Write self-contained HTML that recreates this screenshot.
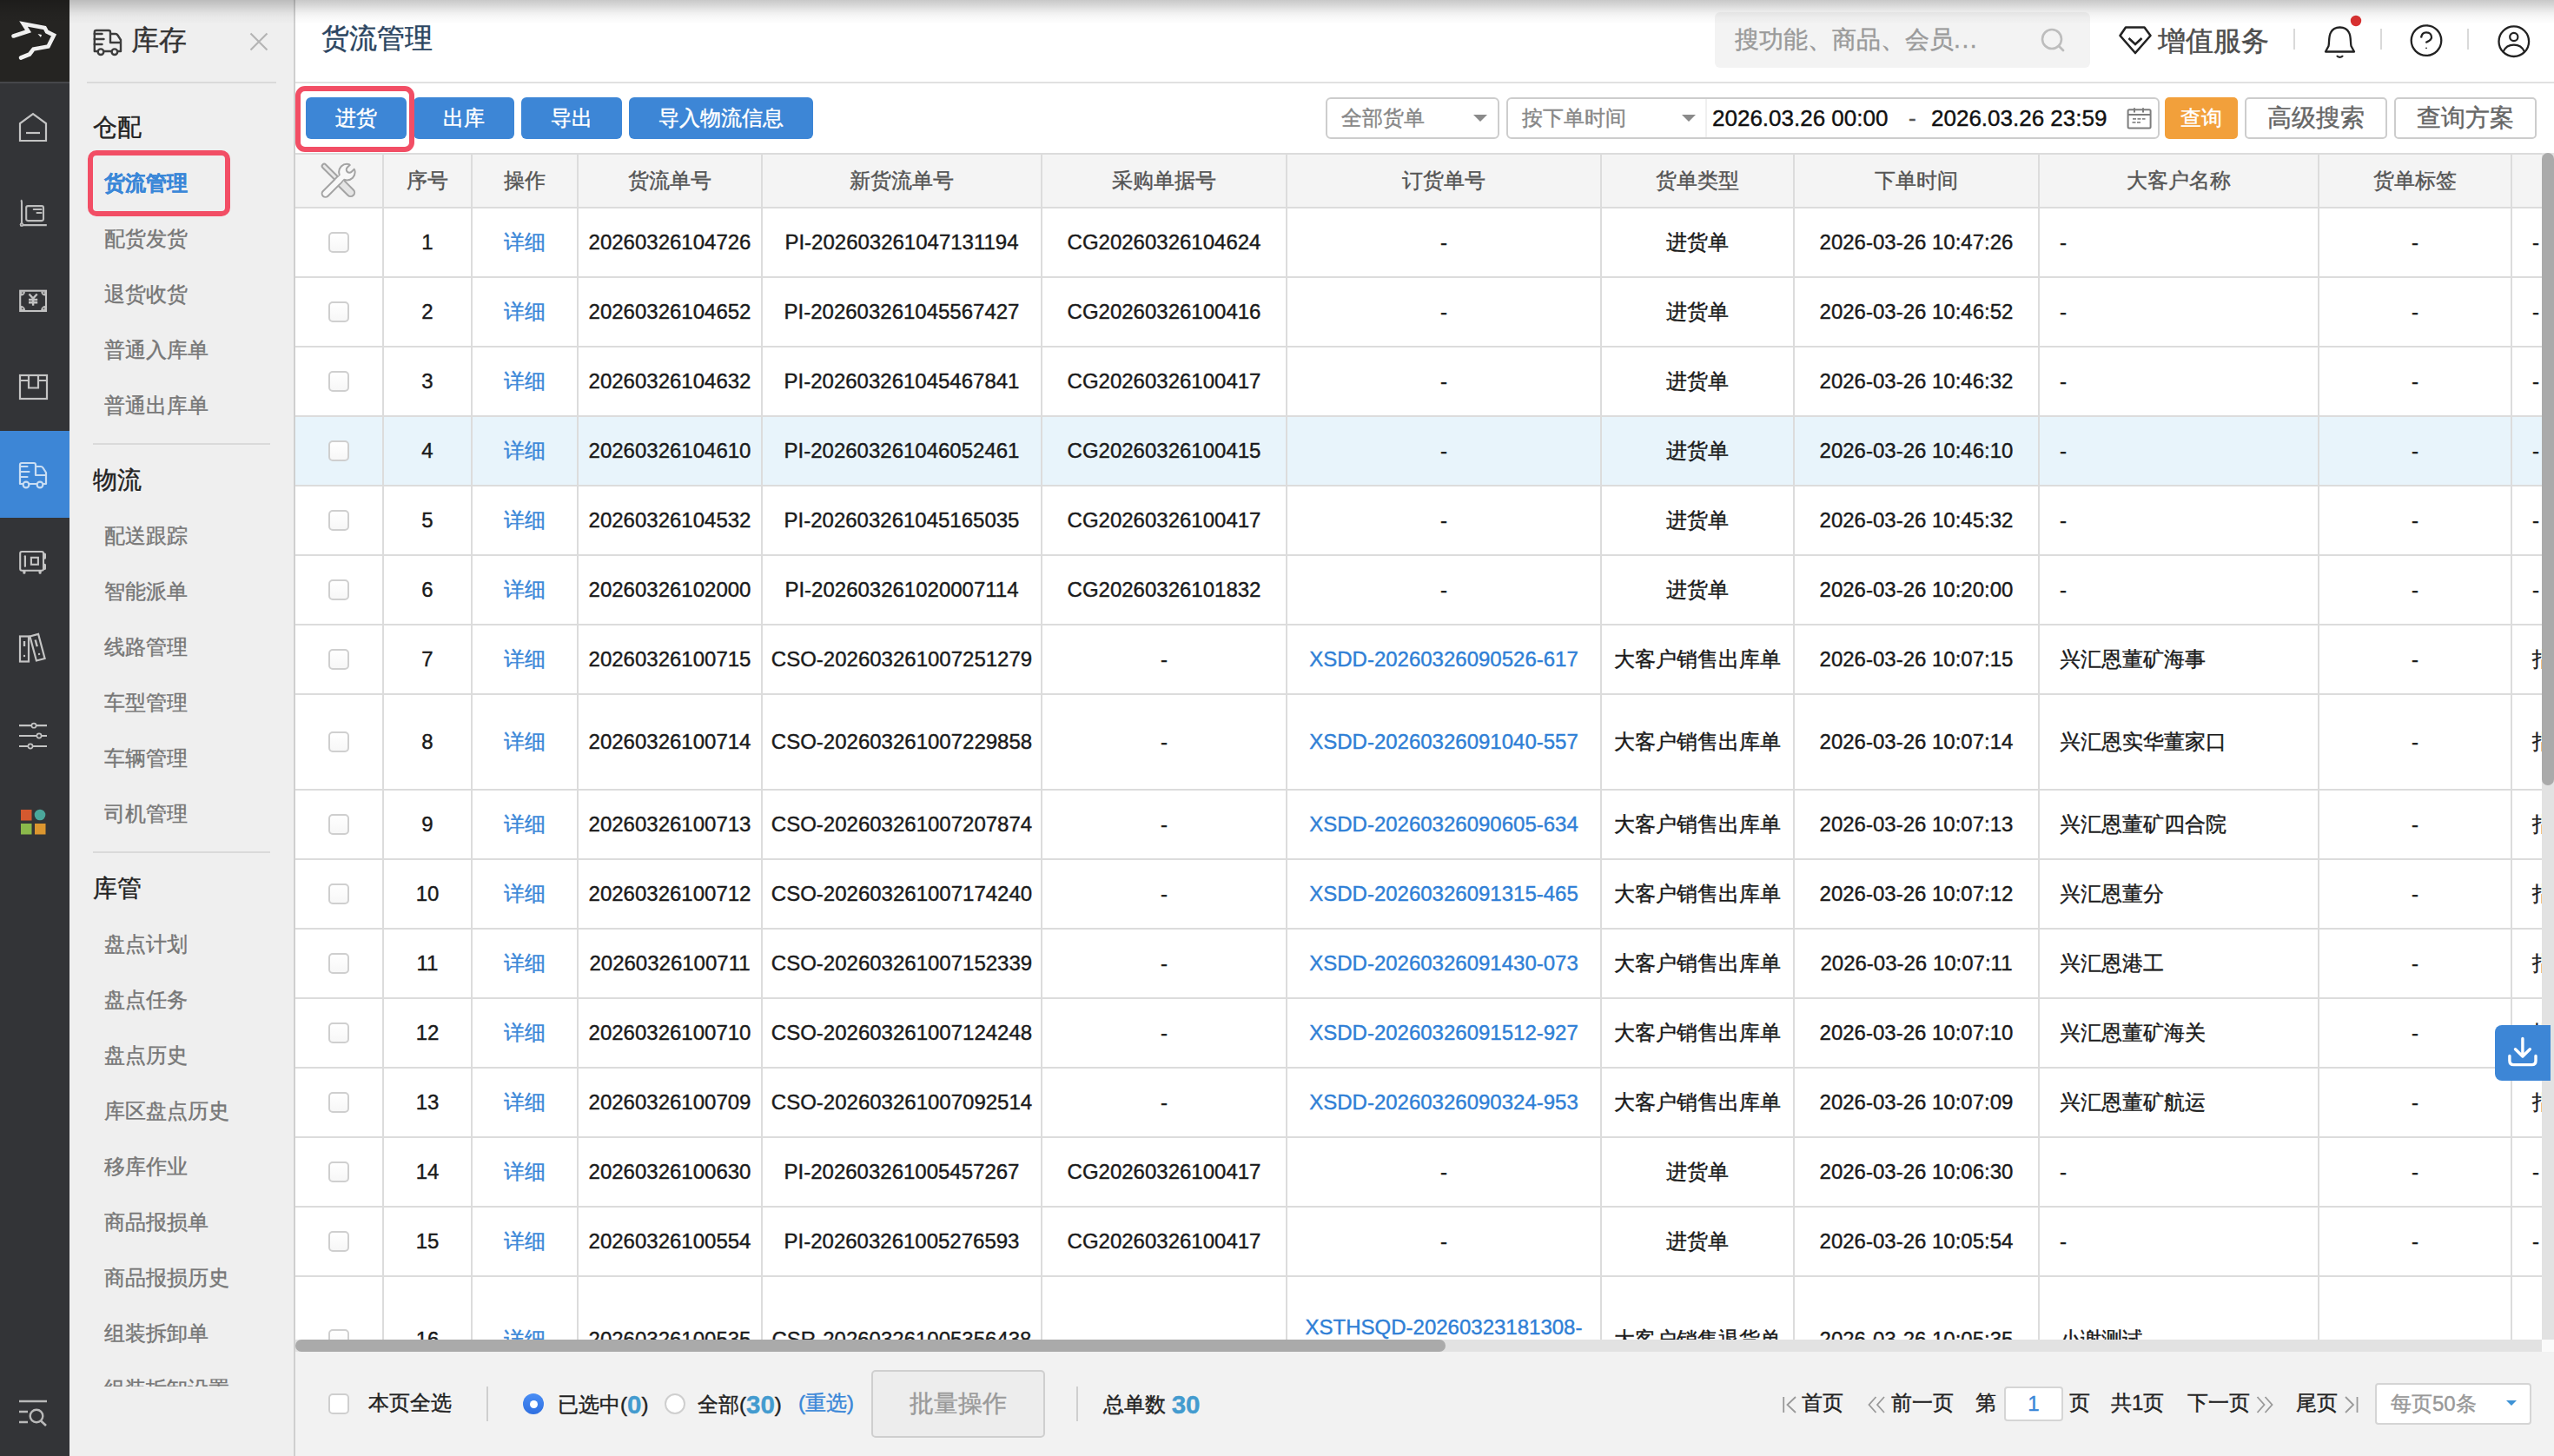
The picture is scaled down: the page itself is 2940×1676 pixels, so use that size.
<!DOCTYPE html><html><head><meta charset="utf-8"><title>货流管理</title><style>
*{box-sizing:border-box;margin:0;padding:0}
html,body{width:2940px;height:1676px;overflow:hidden;background:#fff;font-family:"Liberation Sans", sans-serif;-webkit-text-stroke-width:0.4px}
.a{position:absolute;white-space:nowrap}
.c{text-align:center}
svg{position:absolute;overflow:visible}
</style></head><body>
<div class="a" style="left:0;top:0;width:80px;height:1676px;background:#333437"></div>
<div class="a" style="left:0;top:0;width:80px;height:94px;background:#252422"></div>
<div class="a" style="left:0;top:94px;width:80px;height:2px;background:#46474a"></div>
<div class="a" style="left:0;top:496px;width:80px;height:100px;background:#3d86d6"></div>
<svg style="left:0;top:0" width="80" height="94"><path d="M15.5,41.5 L32.5,36 L27,27.5 L51.5,32 L54,36.5 L62,40.5 L55.5,53.5 L38.5,56.5 L34,62.5 L24,66.5" fill="none" stroke="#f0f0f0" stroke-width="4.6" stroke-linejoin="miter" stroke-linecap="round"/><path d="M43.5,39 L48,40 L47,43 Z" fill="#f2f2f2"/></svg>
<svg style="left:0;top:96px" width="80" height="100"><path d="M23,66 L23,46 L38,35 L53,46 L53,66 Z" fill="none" stroke="#c4c4c4" stroke-width="2.2"/><path d="M30,57 L46,57" stroke="#c4c4c4" stroke-width="2.2"/></svg>
<svg style="left:0;top:196px" width="80" height="100"><path d="M24.2,34.2 Q25,35 25,37 L25,62 M23,63.1 L53.8,63.1" fill="none" stroke="#bdbdbd" stroke-width="2.1"/><circle cx="25" cy="62.6" r="2.3" fill="#bdbdbd"/><circle cx="25" cy="62.6" r="0.8" fill="#777"/><rect x="30.2" y="41.1" width="19.8" height="17" rx="2" fill="none" stroke="#bdbdbd" stroke-width="2.1"/><path d="M38.7,44.9 L47.6,44.9 M42.5,49 L47.6,49" stroke="#bdbdbd" stroke-width="2" stroke-linecap="round"/></svg>
<svg style="left:0;top:296px" width="80" height="100"><rect x="23.2" y="38.7" width="29.8" height="23.3" fill="none" stroke="#c2c2c2" stroke-width="2.1"/><path d="M24,39.6 L29,39.6 A5,5 0 0 1 24,44.6 Z M52.2,39.6 L47.2,39.6 A5,5 0 0 0 52.2,44.6 Z M24,61.1 L29,61.1 A5,5 0 0 0 24,56.1 Z M52.2,61.1 L47.2,61.1 A5,5 0 0 1 52.2,56.1 Z" fill="#c2c2c2"/><circle cx="25.8" cy="41.3" r="1" fill="#5a5a5a"/><circle cx="50.4" cy="41.3" r="1" fill="#5a5a5a"/><circle cx="25.8" cy="59.3" r="1" fill="#5a5a5a"/><circle cx="50.4" cy="59.3" r="1" fill="#5a5a5a"/><path d="M33.5,42.5 L38.1,47.5 L42.7,42.5 M38.1,47.5 L38.1,55.8 M33,49 L43.2,49 M33,52.2 L43.2,52.2" fill="none" stroke="#c2c2c2" stroke-width="2.4"/></svg>
<svg style="left:0;top:396px" width="80" height="100"><rect x="23" y="36" width="31" height="27" fill="none" stroke="#c4c4c4" stroke-width="2.2"/><path d="M23,42 L33,42 M44,42 L54,42 M33,36 L33,50.5 L44,50.5 L44,36" fill="none" stroke="#c4c4c4" stroke-width="2.2"/></svg>
<svg style="left:0;top:496px" width="80" height="100"><path d="M53,51 L41,51 L41,39 Q41,37 39,37 L25,37 Q23,37 23,39 L23,61 L53,61 L53,48 L49.5,42.5 Q48.5,41 47,41 L41,41" fill="none" stroke="#c9ddf3" stroke-width="2.2" stroke-linejoin="round"/><path d="M23,41 L31.5,41 M23,47 L33.5,47 M23,53 L31.5,53" stroke="#c9ddf3" stroke-width="2.2" stroke-linecap="round"/><circle cx="30" cy="62" r="3.4" fill="#3d86d6" stroke="#c9ddf3" stroke-width="2.2"/><circle cx="46" cy="62" r="3.4" fill="#3d86d6" stroke="#c9ddf3" stroke-width="2.2"/></svg>
<svg style="left:0;top:596px" width="80" height="100"><rect x="23.2" y="39" width="26.8" height="21.8" rx="2" fill="none" stroke="#c4c4c4" stroke-width="2.1"/><path d="M51.5,42 L51.5,46.2 M51.5,54.2 L51.5,58.4" stroke="#c4c4c4" stroke-width="3" stroke-linecap="round"/><path d="M28.9,44.3 L28.9,55.8" stroke="#c4c4c4" stroke-width="2.2" stroke-linecap="round"/><rect x="35.9" y="45.8" width="8" height="8" fill="none" stroke="#c4c4c4" stroke-width="2.1"/><path d="M27.9,61.5 L27.9,63.2 M46.1,61.5 L46.1,63.2" stroke="#c4c4c4" stroke-width="3.2" stroke-linecap="round"/></svg>
<svg style="left:0;top:696px" width="80" height="100"><rect x="23" y="36.5" width="10" height="29" fill="none" stroke="#c4c4c4" stroke-width="2.2"/><path d="M28,42 L28,48" stroke="#c4c4c4" stroke-width="2.4"/><circle cx="28" cy="59" r="1.2" fill="#c4c4c4"/><g transform="translate(0,-1.8) rotate(-15 43 51)"><rect x="38" y="36.5" width="10" height="29" fill="none" stroke="#c4c4c4" stroke-width="2.2"/><path d="M43,42 L43,50" stroke="#c4c4c4" stroke-width="2.4"/><circle cx="43" cy="59" r="1.2" fill="#c4c4c4"/></g></svg>
<svg style="left:0;top:796px" width="80" height="100"><path d="M22,39.2 L54,39.2 M22,51 L54,51 M22,63 L54,63" stroke="#c4c4c4" stroke-width="2.2"/><circle cx="39" cy="39.2" r="2.6" fill="#333437" stroke="#c4c4c4" stroke-width="1.6"/><circle cx="45" cy="51" r="2.6" fill="#333437" stroke="#c4c4c4" stroke-width="1.6"/><circle cx="35" cy="63" r="2.6" fill="#333437" stroke="#c4c4c4" stroke-width="1.6"/></svg>
<svg style="left:0;top:896px" width="80" height="100"><rect x="24" y="36" width="12.5" height="12.5" fill="#d5592f"/><circle cx="46" cy="42" r="6.3" fill="#4ba79b"/><rect x="24" y="52" width="12.5" height="12.5" fill="#8bb84b"/><rect x="40" y="52" width="12.5" height="12.5" fill="#dc962f"/></svg>
<svg style="left:0;top:1576px" width="80" height="100"><path d="M22,37 L54,37 M22,49 L32,49 M22,61 L32,61" stroke="#b9b9b9" stroke-width="2.6"/><circle cx="42" cy="54" r="7.3" fill="none" stroke="#b9b9b9" stroke-width="2.4"/><path d="M47,59.5 L53,65" stroke="#b9b9b9" stroke-width="2.6"/></svg>
<div class="a" style="left:80px;top:0;width:258px;height:1676px;background:#efefef"></div>
<div class="a" style="left:338px;top:0;width:2px;height:1676px;background:#cfcfcf"></div>
<svg style="left:80px;top:0" width="80" height="94"><path d="M59,49 L47,49 L47,37 Q47,35 45,35 L30.8,35 Q28.8,35 28.8,37 L28.8,59 L59,59 L59,46 L55.5,40.5 Q54.5,39 53,39 L47,39" fill="none" stroke="#3c3c3c" stroke-width="2.4" stroke-linejoin="round"/><path d="M28.8,39 L37.5,39 M28.8,45 L39.5,45 M28.8,51 L37.5,51" stroke="#3c3c3c" stroke-width="2.4" stroke-linecap="round"/><circle cx="36" cy="59.7" r="3.3" fill="#efefef" stroke="#3c3c3c" stroke-width="2.4"/><circle cx="51.9" cy="59.7" r="3.3" fill="#efefef" stroke="#3c3c3c" stroke-width="2.4"/></svg>
<div class="a" style="left:151px;top:26px;height:40px;line-height:40px;font-size:32px;color:#333">库存</div>
<svg style="left:280px;top:30px" width="36" height="36"><path d="M8.5,8.5 L27.5,27.5 M27.5,8.5 L8.5,27.5" stroke="#b4b4b4" stroke-width="2.2"/></svg>
<div class="a" style="left:100px;top:94px;width:218px;height:2px;background:#dadada"></div>
<div class="a" style="left:107px;top:127px;height:40px;line-height:40px;font-size:28px;color:#222">仓配</div>
<div class="a" style="left:120px;top:191px;height:40px;line-height:40px;font-size:24px;color:#3a87d8;font-weight:bold;-webkit-text-stroke:0.3px #3a87d8">货流管理</div>
<div class="a" style="left:120px;top:255px;height:40px;line-height:40px;font-size:24px;color:#777">配货发货</div>
<div class="a" style="left:120px;top:319px;height:40px;line-height:40px;font-size:24px;color:#777">退货收货</div>
<div class="a" style="left:120px;top:383px;height:40px;line-height:40px;font-size:24px;color:#777">普通入库单</div>
<div class="a" style="left:120px;top:447px;height:40px;line-height:40px;font-size:24px;color:#777">普通出库单</div>
<div class="a" style="left:107px;top:510px;width:204px;height:2px;background:#dadada"></div>
<div class="a" style="left:107px;top:533px;height:40px;line-height:40px;font-size:28px;color:#222">物流</div>
<div class="a" style="left:120px;top:597px;height:40px;line-height:40px;font-size:24px;color:#777">配送跟踪</div>
<div class="a" style="left:120px;top:661px;height:40px;line-height:40px;font-size:24px;color:#777">智能派单</div>
<div class="a" style="left:120px;top:725px;height:40px;line-height:40px;font-size:24px;color:#777">线路管理</div>
<div class="a" style="left:120px;top:789px;height:40px;line-height:40px;font-size:24px;color:#777">车型管理</div>
<div class="a" style="left:120px;top:853px;height:40px;line-height:40px;font-size:24px;color:#777">车辆管理</div>
<div class="a" style="left:120px;top:917px;height:40px;line-height:40px;font-size:24px;color:#777">司机管理</div>
<div class="a" style="left:107px;top:980px;width:204px;height:2px;background:#dadada"></div>
<div class="a" style="left:107px;top:1003px;height:40px;line-height:40px;font-size:28px;color:#222">库管</div>
<div class="a" style="left:80px;top:0;width:258px;height:1596px;overflow:hidden">
<div class="a" style="left:40px;top:1067px;height:40px;line-height:40px;font-size:24px;color:#777">盘点计划</div>
<div class="a" style="left:40px;top:1131px;height:40px;line-height:40px;font-size:24px;color:#777">盘点任务</div>
<div class="a" style="left:40px;top:1195px;height:40px;line-height:40px;font-size:24px;color:#777">盘点历史</div>
<div class="a" style="left:40px;top:1259px;height:40px;line-height:40px;font-size:24px;color:#777">库区盘点历史</div>
<div class="a" style="left:40px;top:1323px;height:40px;line-height:40px;font-size:24px;color:#777">移库作业</div>
<div class="a" style="left:40px;top:1387px;height:40px;line-height:40px;font-size:24px;color:#777">商品报损单</div>
<div class="a" style="left:40px;top:1451px;height:40px;line-height:40px;font-size:24px;color:#777">商品报损历史</div>
<div class="a" style="left:40px;top:1515px;height:40px;line-height:40px;font-size:24px;color:#777">组装拆卸单</div>
<div class="a" style="left:40px;top:1579px;height:40px;line-height:40px;font-size:24px;color:#777">组装拆卸设置</div>
</div>
<div class="a" style="left:101px;top:173px;width:164px;height:76px;border:6px solid #f24e65;border-radius:10px"></div>
<div class="a" style="left:370px;top:22px;height:44px;line-height:44px;font-size:32px;color:#2b4561">货流管理</div>
<div class="a" style="left:340px;top:94px;width:2600px;height:2px;background:#e1e1e1"></div>
<div class="a" style="left:1974px;top:14px;width:432px;height:64px;background:#f3f3f3;border-radius:6px"></div>
<div class="a" style="left:1997px;top:26px;height:40px;line-height:40px;font-size:28px;color:#9a9a9a">搜功能、商品、会员<span style="letter-spacing:1.6px">...</span></div>
<svg style="left:2340px;top:23.5px" width="44" height="44"><circle cx="22" cy="21" r="11" fill="none" stroke="#bdbdbd" stroke-width="2.6"/><path d="M30,29 L35,34" stroke="#bdbdbd" stroke-width="2.8" stroke-linecap="round"/></svg>
<svg style="left:2430px;top:20px" width="56" height="50"><path d="M17,11.5 L38.5,11.5 L45.5,21 L28,41 L10.5,21 Z" fill="none" stroke="#222" stroke-width="2.6" stroke-linejoin="round"/><path d="M20.5,24 L28,31 L35.5,24" fill="none" stroke="#222" stroke-width="2.6"/></svg>
<div class="a" style="left:2484px;top:25px;height:44px;line-height:44px;font-size:32px;color:#4d4d4d">增值服务</div>
<div class="a" style="left:2640px;top:33px;width:2px;height:24px;background:#d9d9d9"></div>
<div class="a" style="left:2740px;top:33px;width:2px;height:24px;background:#d9d9d9"></div>
<div class="a" style="left:2840px;top:33px;width:2px;height:24px;background:#d9d9d9"></div>
<svg style="left:2660px;top:20px" width="70" height="56"><path d="M17,39.5 L20.5,33 C21.5,28 20.5,22 23,17.5 C25,13.5 28,11.5 33.5,11.5 C39,11.5 42,13.5 44,17.5 C46.5,22 45.5,28 46.5,33 L50,39.5 Z" fill="none" stroke="#222" stroke-width="2.3" stroke-linejoin="round"/><path d="M30,44 C31.5,46.5 35.5,46.5 37,44" fill="none" stroke="#222" stroke-width="2.2"/><circle cx="52" cy="4" r="6.2" fill="#d93131"/></svg>
<svg style="left:2760px;top:14px" width="66" height="66"><circle cx="33" cy="32.6" r="17.3" fill="none" stroke="#222" stroke-width="2.3"/><path d="M27,29.5 C27.5,25.5 30,23.3 33,23.3 C36.5,23.3 39,25.8 39,29 C39,32 36,33.5 32.3,35" fill="none" stroke="#222" stroke-width="2.3"/><circle cx="33" cy="41.3" r="0.9" fill="#222"/></svg>
<svg style="left:2860px;top:14px" width="66" height="66"><circle cx="33.8" cy="33.7" r="17.3" fill="none" stroke="#222" stroke-width="2.3"/><circle cx="33.8" cy="28.5" r="4.6" fill="none" stroke="#222" stroke-width="2.2"/><path d="M21.5,45.5 C24,40 28.5,37.7 33.8,37.7 C39,37.7 43.5,40 46,45.5" fill="none" stroke="#222" stroke-width="2.2"/></svg>
<div class="a c" style="left:352px;top:112px;width:116px;height:48px;line-height:48px;background:#3d86d6;border-radius:6px;font-size:24px;color:#fff">进货</div>
<div class="a c" style="left:476px;top:112px;width:116px;height:48px;line-height:48px;background:#3d86d6;border-radius:6px;font-size:24px;color:#fff">出库</div>
<div class="a c" style="left:600px;top:112px;width:116px;height:48px;line-height:48px;background:#3d86d6;border-radius:6px;font-size:24px;color:#fff">导出</div>
<div class="a c" style="left:724px;top:112px;width:212px;height:48px;line-height:48px;background:#3d86d6;border-radius:6px;font-size:24px;color:#fff">导入物流信息</div>
<div class="a" style="left:340px;top:99px;width:137px;height:76px;border:6px solid #f24e65;border-radius:11px"></div>
<div class="a" style="left:1526px;top:112px;width:200px;height:48px;border:2px solid #cdcdcd;border-radius:6px;background:#fff"></div>
<div class="a" style="left:1544px;top:116px;height:40px;line-height:40px;font-size:24px;color:#888">全部货单</div>
<svg style="left:1690px;top:126px" width="28" height="20"><path d="M6,6 L22,6 L14,14 Z" fill="#8a8a8a"/></svg>
<div class="a" style="left:1734px;top:112px;width:752px;height:48px;border:2px solid #cdcdcd;border-radius:6px;background:#fff"></div>
<div class="a" style="left:1963px;top:114px;width:2px;height:44px;background:#f0f0f0"></div>
<div class="a" style="left:1752px;top:116px;height:40px;line-height:40px;font-size:24px;color:#888">按下单时间</div>
<svg style="left:1930px;top:126px" width="28" height="20"><path d="M6,6 L22,6 L14,14 Z" fill="#8a8a8a"/></svg>
<div class="a" style="left:1971px;top:116px;height:40px;line-height:40px;font-size:26px;color:#111">2026.03.26 00:00</div>
<div class="a" style="left:2197px;top:116px;height:40px;line-height:40px;font-size:26px;color:#555">-</div>
<div class="a" style="left:2223px;top:116px;height:40px;line-height:40px;font-size:26px;color:#111">2026.03.26 23:59</div>
<svg style="left:2440px;top:116px" width="44" height="40"><rect x="9.6" y="10.2" width="26" height="21.2" rx="1.5" fill="none" stroke="#7d7d7d" stroke-width="2"/><path d="M9.6,16.1 L35.6,16.1 M17,8.3 L17,13.4 M27,8.3 L27,13.4" stroke="#7d7d7d" stroke-width="2"/><path d="M15,20.8h4M20.5,20.8h4M26,20.8h3.5M14.5,24.9h4M20,24.9h4" stroke="#888" stroke-width="1.7"/></svg>
<div class="a c" style="left:2492px;top:112px;width:84px;height:48px;line-height:48px;background:#f2a03b;border-radius:5px;font-size:24px;color:#fff">查询</div>
<div class="a c" style="left:2584px;top:112px;width:164px;height:48px;line-height:44px;border:2px solid #cdcdcd;border-radius:5px;font-size:28px;color:#666">高级搜索</div>
<div class="a c" style="left:2756px;top:112px;width:164px;height:48px;line-height:44px;border:2px solid #cdcdcd;border-radius:5px;font-size:28px;color:#666">查询方案</div>
<div class="a" style="left:340px;top:176px;width:2586px;height:1366px;overflow:hidden">
<div class="a" style="left:0;top:2px;width:2800px;height:62px;background:#f4f4f4"></div>
<div class="a" style="left:0;top:304px;width:2800px;height:78px;background:#e8f4fb"></div>
<div class="a" style="left:0;top:0;width:2800px;height:2px;background:#dcdcdc"></div>
<div class="a" style="left:0;top:62px;width:2800px;height:2px;background:#dcdcdc"></div>
<div class="a" style="left:0;top:142px;width:2800px;height:2px;background:#dcdcdc"></div>
<div class="a" style="left:0;top:222px;width:2800px;height:2px;background:#dcdcdc"></div>
<div class="a" style="left:0;top:302px;width:2800px;height:2px;background:#dcdcdc"></div>
<div class="a" style="left:0;top:382px;width:2800px;height:2px;background:#dcdcdc"></div>
<div class="a" style="left:0;top:462px;width:2800px;height:2px;background:#dcdcdc"></div>
<div class="a" style="left:0;top:542px;width:2800px;height:2px;background:#dcdcdc"></div>
<div class="a" style="left:0;top:622px;width:2800px;height:2px;background:#dcdcdc"></div>
<div class="a" style="left:0;top:732px;width:2800px;height:2px;background:#dcdcdc"></div>
<div class="a" style="left:0;top:812px;width:2800px;height:2px;background:#dcdcdc"></div>
<div class="a" style="left:0;top:892px;width:2800px;height:2px;background:#dcdcdc"></div>
<div class="a" style="left:0;top:972px;width:2800px;height:2px;background:#dcdcdc"></div>
<div class="a" style="left:0;top:1052px;width:2800px;height:2px;background:#dcdcdc"></div>
<div class="a" style="left:0;top:1132px;width:2800px;height:2px;background:#dcdcdc"></div>
<div class="a" style="left:0;top:1212px;width:2800px;height:2px;background:#dcdcdc"></div>
<div class="a" style="left:0;top:1292px;width:2800px;height:2px;background:#dcdcdc"></div>
<div class="a" style="left:0;top:1438px;width:2800px;height:2px;background:#dcdcdc"></div>
<div class="a" style="left:100px;top:0;width:2px;height:1400px;background:#dcdcdc"></div>
<div class="a" style="left:202px;top:0;width:2px;height:1400px;background:#dcdcdc"></div>
<div class="a" style="left:324px;top:0;width:2px;height:1400px;background:#dcdcdc"></div>
<div class="a" style="left:536px;top:0;width:2px;height:1400px;background:#dcdcdc"></div>
<div class="a" style="left:858px;top:0;width:2px;height:1400px;background:#dcdcdc"></div>
<div class="a" style="left:1140px;top:0;width:2px;height:1400px;background:#dcdcdc"></div>
<div class="a" style="left:1502px;top:0;width:2px;height:1400px;background:#dcdcdc"></div>
<div class="a" style="left:1724px;top:0;width:2px;height:1400px;background:#dcdcdc"></div>
<div class="a" style="left:2006px;top:0;width:2px;height:1400px;background:#dcdcdc"></div>
<div class="a" style="left:2328px;top:0;width:2px;height:1400px;background:#dcdcdc"></div>
<div class="a" style="left:2550px;top:0;width:2px;height:1400px;background:#dcdcdc"></div>
<div class="a c" style="left:101px;top:12px;width:102px;height:40px;line-height:40px;font-size:24px;color:#555">序号</div>
<div class="a c" style="left:203px;top:12px;width:122px;height:40px;line-height:40px;font-size:24px;color:#555">操作</div>
<div class="a c" style="left:325px;top:12px;width:212px;height:40px;line-height:40px;font-size:24px;color:#555">货流单号</div>
<div class="a c" style="left:537px;top:12px;width:322px;height:40px;line-height:40px;font-size:24px;color:#555">新货流单号</div>
<div class="a c" style="left:859px;top:12px;width:282px;height:40px;line-height:40px;font-size:24px;color:#555">采购单据号</div>
<div class="a c" style="left:1141px;top:12px;width:362px;height:40px;line-height:40px;font-size:24px;color:#555">订货单号</div>
<div class="a c" style="left:1503px;top:12px;width:222px;height:40px;line-height:40px;font-size:24px;color:#555">货单类型</div>
<div class="a c" style="left:1725px;top:12px;width:282px;height:40px;line-height:40px;font-size:24px;color:#555">下单时间</div>
<div class="a c" style="left:2007px;top:12px;width:322px;height:40px;line-height:40px;font-size:24px;color:#555">大客户名称</div>
<div class="a c" style="left:2329px;top:12px;width:222px;height:40px;line-height:40px;font-size:24px;color:#555">货单标签</div>
<svg style="left:24px;top:6px" width="54" height="52"><g transform="rotate(45 8.5 8.5)"><rect x="7" y="6" width="26" height="5" rx="2.5" fill="#e8e8e8" stroke="#a3a3a3" stroke-width="2"/><rect x="32" y="4" width="25" height="9" rx="4.5" fill="#e4e4e4" stroke="#a3a3a3" stroke-width="2"/></g><g transform="rotate(-45 11 40.5)"><rect x="6.5" y="36.5" width="30" height="8" rx="4" fill="#f8f8f8" stroke="#a3a3a3" stroke-width="2"/><circle cx="45.5" cy="40.5" r="9.3" fill="#f8f8f8" stroke="#a3a3a3" stroke-width="2"/><rect x="30" y="37.5" width="9" height="6" fill="#f8f8f8"/><rect x="52" y="38" width="8" height="5" fill="#f4f4f4"/><path d="M54.6,37 L49.5,37 A3.5,3.5 0 0 0 49.5,44 L54.6,44" fill="#f4f4f4" stroke="#a3a3a3" stroke-width="2"/><rect x="54.6" y="35" width="6" height="11" fill="#f4f4f4"/></g></svg>
<div class="a" style="left:38px;top:91px;width:24px;height:24px;border:2px solid #cfcfcf;border-radius:5px;background:linear-gradient(#fff,#f7f7f7)"></div>
<div class="a c" style="left:101px;top:83px;width:102px;height:40px;line-height:40px;font-size:24px;color:#1a1a1a">1</div>
<div class="a c" style="left:203px;top:83px;width:122px;height:40px;line-height:40px;font-size:24px;color:#3a87d8">详细</div>
<div class="a c" style="left:325px;top:83px;width:212px;height:40px;line-height:40px;font-size:24px;color:#1a1a1a">20260326104726</div>
<div class="a c" style="left:537px;top:83px;width:322px;height:40px;line-height:40px;font-size:24px;color:#1a1a1a">PI-202603261047131194</div>
<div class="a c" style="left:859px;top:83px;width:282px;height:40px;line-height:40px;font-size:24px;color:#1a1a1a">CG20260326104624</div>
<div class="a c" style="left:1141px;top:83px;width:362px;height:40px;line-height:40px;font-size:24px;color:#1a1a1a">-</div>
<div class="a c" style="left:1503px;top:83px;width:222px;height:40px;line-height:40px;font-size:24px;color:#1a1a1a">进货单</div>
<div class="a c" style="left:1725px;top:83px;width:282px;height:40px;line-height:40px;font-size:24px;color:#1a1a1a">2026-03-26 10:47:26</div>
<div class="a" style="left:2031px;top:83px;height:40px;line-height:40px;font-size:24px;color:#1a1a1a">-</div>
<div class="a c" style="left:2329px;top:83px;width:222px;height:40px;line-height:40px;font-size:24px;color:#1a1a1a">-</div>
<div class="a" style="left:2575px;top:83px;height:40px;line-height:40px;font-size:24px;color:#1a1a1a">-</div>
<div class="a" style="left:38px;top:171px;width:24px;height:24px;border:2px solid #cfcfcf;border-radius:5px;background:linear-gradient(#fff,#f7f7f7)"></div>
<div class="a c" style="left:101px;top:163px;width:102px;height:40px;line-height:40px;font-size:24px;color:#1a1a1a">2</div>
<div class="a c" style="left:203px;top:163px;width:122px;height:40px;line-height:40px;font-size:24px;color:#3a87d8">详细</div>
<div class="a c" style="left:325px;top:163px;width:212px;height:40px;line-height:40px;font-size:24px;color:#1a1a1a">20260326104652</div>
<div class="a c" style="left:537px;top:163px;width:322px;height:40px;line-height:40px;font-size:24px;color:#1a1a1a">PI-202603261045567427</div>
<div class="a c" style="left:859px;top:163px;width:282px;height:40px;line-height:40px;font-size:24px;color:#1a1a1a">CG20260326100416</div>
<div class="a c" style="left:1141px;top:163px;width:362px;height:40px;line-height:40px;font-size:24px;color:#1a1a1a">-</div>
<div class="a c" style="left:1503px;top:163px;width:222px;height:40px;line-height:40px;font-size:24px;color:#1a1a1a">进货单</div>
<div class="a c" style="left:1725px;top:163px;width:282px;height:40px;line-height:40px;font-size:24px;color:#1a1a1a">2026-03-26 10:46:52</div>
<div class="a" style="left:2031px;top:163px;height:40px;line-height:40px;font-size:24px;color:#1a1a1a">-</div>
<div class="a c" style="left:2329px;top:163px;width:222px;height:40px;line-height:40px;font-size:24px;color:#1a1a1a">-</div>
<div class="a" style="left:2575px;top:163px;height:40px;line-height:40px;font-size:24px;color:#1a1a1a">-</div>
<div class="a" style="left:38px;top:251px;width:24px;height:24px;border:2px solid #cfcfcf;border-radius:5px;background:linear-gradient(#fff,#f7f7f7)"></div>
<div class="a c" style="left:101px;top:243px;width:102px;height:40px;line-height:40px;font-size:24px;color:#1a1a1a">3</div>
<div class="a c" style="left:203px;top:243px;width:122px;height:40px;line-height:40px;font-size:24px;color:#3a87d8">详细</div>
<div class="a c" style="left:325px;top:243px;width:212px;height:40px;line-height:40px;font-size:24px;color:#1a1a1a">20260326104632</div>
<div class="a c" style="left:537px;top:243px;width:322px;height:40px;line-height:40px;font-size:24px;color:#1a1a1a">PI-202603261045467841</div>
<div class="a c" style="left:859px;top:243px;width:282px;height:40px;line-height:40px;font-size:24px;color:#1a1a1a">CG20260326100417</div>
<div class="a c" style="left:1141px;top:243px;width:362px;height:40px;line-height:40px;font-size:24px;color:#1a1a1a">-</div>
<div class="a c" style="left:1503px;top:243px;width:222px;height:40px;line-height:40px;font-size:24px;color:#1a1a1a">进货单</div>
<div class="a c" style="left:1725px;top:243px;width:282px;height:40px;line-height:40px;font-size:24px;color:#1a1a1a">2026-03-26 10:46:32</div>
<div class="a" style="left:2031px;top:243px;height:40px;line-height:40px;font-size:24px;color:#1a1a1a">-</div>
<div class="a c" style="left:2329px;top:243px;width:222px;height:40px;line-height:40px;font-size:24px;color:#1a1a1a">-</div>
<div class="a" style="left:2575px;top:243px;height:40px;line-height:40px;font-size:24px;color:#1a1a1a">-</div>
<div class="a" style="left:38px;top:331px;width:24px;height:24px;border:2px solid #cfcfcf;border-radius:5px;background:linear-gradient(#fff,#f7f7f7)"></div>
<div class="a c" style="left:101px;top:323px;width:102px;height:40px;line-height:40px;font-size:24px;color:#1a1a1a">4</div>
<div class="a c" style="left:203px;top:323px;width:122px;height:40px;line-height:40px;font-size:24px;color:#3a87d8">详细</div>
<div class="a c" style="left:325px;top:323px;width:212px;height:40px;line-height:40px;font-size:24px;color:#1a1a1a">20260326104610</div>
<div class="a c" style="left:537px;top:323px;width:322px;height:40px;line-height:40px;font-size:24px;color:#1a1a1a">PI-202603261046052461</div>
<div class="a c" style="left:859px;top:323px;width:282px;height:40px;line-height:40px;font-size:24px;color:#1a1a1a">CG20260326100415</div>
<div class="a c" style="left:1141px;top:323px;width:362px;height:40px;line-height:40px;font-size:24px;color:#1a1a1a">-</div>
<div class="a c" style="left:1503px;top:323px;width:222px;height:40px;line-height:40px;font-size:24px;color:#1a1a1a">进货单</div>
<div class="a c" style="left:1725px;top:323px;width:282px;height:40px;line-height:40px;font-size:24px;color:#1a1a1a">2026-03-26 10:46:10</div>
<div class="a" style="left:2031px;top:323px;height:40px;line-height:40px;font-size:24px;color:#1a1a1a">-</div>
<div class="a c" style="left:2329px;top:323px;width:222px;height:40px;line-height:40px;font-size:24px;color:#1a1a1a">-</div>
<div class="a" style="left:2575px;top:323px;height:40px;line-height:40px;font-size:24px;color:#1a1a1a">-</div>
<div class="a" style="left:38px;top:411px;width:24px;height:24px;border:2px solid #cfcfcf;border-radius:5px;background:linear-gradient(#fff,#f7f7f7)"></div>
<div class="a c" style="left:101px;top:403px;width:102px;height:40px;line-height:40px;font-size:24px;color:#1a1a1a">5</div>
<div class="a c" style="left:203px;top:403px;width:122px;height:40px;line-height:40px;font-size:24px;color:#3a87d8">详细</div>
<div class="a c" style="left:325px;top:403px;width:212px;height:40px;line-height:40px;font-size:24px;color:#1a1a1a">20260326104532</div>
<div class="a c" style="left:537px;top:403px;width:322px;height:40px;line-height:40px;font-size:24px;color:#1a1a1a">PI-202603261045165035</div>
<div class="a c" style="left:859px;top:403px;width:282px;height:40px;line-height:40px;font-size:24px;color:#1a1a1a">CG20260326100417</div>
<div class="a c" style="left:1141px;top:403px;width:362px;height:40px;line-height:40px;font-size:24px;color:#1a1a1a">-</div>
<div class="a c" style="left:1503px;top:403px;width:222px;height:40px;line-height:40px;font-size:24px;color:#1a1a1a">进货单</div>
<div class="a c" style="left:1725px;top:403px;width:282px;height:40px;line-height:40px;font-size:24px;color:#1a1a1a">2026-03-26 10:45:32</div>
<div class="a" style="left:2031px;top:403px;height:40px;line-height:40px;font-size:24px;color:#1a1a1a">-</div>
<div class="a c" style="left:2329px;top:403px;width:222px;height:40px;line-height:40px;font-size:24px;color:#1a1a1a">-</div>
<div class="a" style="left:2575px;top:403px;height:40px;line-height:40px;font-size:24px;color:#1a1a1a">-</div>
<div class="a" style="left:38px;top:491px;width:24px;height:24px;border:2px solid #cfcfcf;border-radius:5px;background:linear-gradient(#fff,#f7f7f7)"></div>
<div class="a c" style="left:101px;top:483px;width:102px;height:40px;line-height:40px;font-size:24px;color:#1a1a1a">6</div>
<div class="a c" style="left:203px;top:483px;width:122px;height:40px;line-height:40px;font-size:24px;color:#3a87d8">详细</div>
<div class="a c" style="left:325px;top:483px;width:212px;height:40px;line-height:40px;font-size:24px;color:#1a1a1a">20260326102000</div>
<div class="a c" style="left:537px;top:483px;width:322px;height:40px;line-height:40px;font-size:24px;color:#1a1a1a">PI-202603261020007114</div>
<div class="a c" style="left:859px;top:483px;width:282px;height:40px;line-height:40px;font-size:24px;color:#1a1a1a">CG20260326101832</div>
<div class="a c" style="left:1141px;top:483px;width:362px;height:40px;line-height:40px;font-size:24px;color:#1a1a1a">-</div>
<div class="a c" style="left:1503px;top:483px;width:222px;height:40px;line-height:40px;font-size:24px;color:#1a1a1a">进货单</div>
<div class="a c" style="left:1725px;top:483px;width:282px;height:40px;line-height:40px;font-size:24px;color:#1a1a1a">2026-03-26 10:20:00</div>
<div class="a" style="left:2031px;top:483px;height:40px;line-height:40px;font-size:24px;color:#1a1a1a">-</div>
<div class="a c" style="left:2329px;top:483px;width:222px;height:40px;line-height:40px;font-size:24px;color:#1a1a1a">-</div>
<div class="a" style="left:2575px;top:483px;height:40px;line-height:40px;font-size:24px;color:#1a1a1a">-</div>
<div class="a" style="left:38px;top:571px;width:24px;height:24px;border:2px solid #cfcfcf;border-radius:5px;background:linear-gradient(#fff,#f7f7f7)"></div>
<div class="a c" style="left:101px;top:563px;width:102px;height:40px;line-height:40px;font-size:24px;color:#1a1a1a">7</div>
<div class="a c" style="left:203px;top:563px;width:122px;height:40px;line-height:40px;font-size:24px;color:#3a87d8">详细</div>
<div class="a c" style="left:325px;top:563px;width:212px;height:40px;line-height:40px;font-size:24px;color:#1a1a1a">20260326100715</div>
<div class="a c" style="left:537px;top:563px;width:322px;height:40px;line-height:40px;font-size:24px;color:#1a1a1a">CSO-202603261007251279</div>
<div class="a c" style="left:859px;top:563px;width:282px;height:40px;line-height:40px;font-size:24px;color:#1a1a1a">-</div>
<div class="a c" style="left:1141px;top:563px;width:362px;height:40px;line-height:40px;font-size:24px;color:#2f7fd6">XSDD-20260326090526-617</div>
<div class="a c" style="left:1503px;top:563px;width:222px;height:40px;line-height:40px;font-size:24px;color:#1a1a1a">大客户销售出库单</div>
<div class="a c" style="left:1725px;top:563px;width:282px;height:40px;line-height:40px;font-size:24px;color:#1a1a1a">2026-03-26 10:07:15</div>
<div class="a" style="left:2031px;top:563px;height:40px;line-height:40px;font-size:24px;color:#1a1a1a">兴汇恩董矿海事</div>
<div class="a c" style="left:2329px;top:563px;width:222px;height:40px;line-height:40px;font-size:24px;color:#1a1a1a">-</div>
<div class="a" style="left:2575px;top:563px;height:40px;line-height:40px;font-size:24px;color:#1a1a1a">指</div>
<div class="a" style="left:38px;top:666px;width:24px;height:24px;border:2px solid #cfcfcf;border-radius:5px;background:linear-gradient(#fff,#f7f7f7)"></div>
<div class="a c" style="left:101px;top:658px;width:102px;height:40px;line-height:40px;font-size:24px;color:#1a1a1a">8</div>
<div class="a c" style="left:203px;top:658px;width:122px;height:40px;line-height:40px;font-size:24px;color:#3a87d8">详细</div>
<div class="a c" style="left:325px;top:658px;width:212px;height:40px;line-height:40px;font-size:24px;color:#1a1a1a">20260326100714</div>
<div class="a c" style="left:537px;top:658px;width:322px;height:40px;line-height:40px;font-size:24px;color:#1a1a1a">CSO-202603261007229858</div>
<div class="a c" style="left:859px;top:658px;width:282px;height:40px;line-height:40px;font-size:24px;color:#1a1a1a">-</div>
<div class="a c" style="left:1141px;top:658px;width:362px;height:40px;line-height:40px;font-size:24px;color:#2f7fd6">XSDD-20260326091040-557</div>
<div class="a c" style="left:1503px;top:658px;width:222px;height:40px;line-height:40px;font-size:24px;color:#1a1a1a">大客户销售出库单</div>
<div class="a c" style="left:1725px;top:658px;width:282px;height:40px;line-height:40px;font-size:24px;color:#1a1a1a">2026-03-26 10:07:14</div>
<div class="a" style="left:2031px;top:658px;height:40px;line-height:40px;font-size:24px;color:#1a1a1a">兴汇恩实华董家口</div>
<div class="a c" style="left:2329px;top:658px;width:222px;height:40px;line-height:40px;font-size:24px;color:#1a1a1a">-</div>
<div class="a" style="left:2575px;top:658px;height:40px;line-height:40px;font-size:24px;color:#1a1a1a">指</div>
<div class="a" style="left:38px;top:761px;width:24px;height:24px;border:2px solid #cfcfcf;border-radius:5px;background:linear-gradient(#fff,#f7f7f7)"></div>
<div class="a c" style="left:101px;top:753px;width:102px;height:40px;line-height:40px;font-size:24px;color:#1a1a1a">9</div>
<div class="a c" style="left:203px;top:753px;width:122px;height:40px;line-height:40px;font-size:24px;color:#3a87d8">详细</div>
<div class="a c" style="left:325px;top:753px;width:212px;height:40px;line-height:40px;font-size:24px;color:#1a1a1a">20260326100713</div>
<div class="a c" style="left:537px;top:753px;width:322px;height:40px;line-height:40px;font-size:24px;color:#1a1a1a">CSO-202603261007207874</div>
<div class="a c" style="left:859px;top:753px;width:282px;height:40px;line-height:40px;font-size:24px;color:#1a1a1a">-</div>
<div class="a c" style="left:1141px;top:753px;width:362px;height:40px;line-height:40px;font-size:24px;color:#2f7fd6">XSDD-20260326090605-634</div>
<div class="a c" style="left:1503px;top:753px;width:222px;height:40px;line-height:40px;font-size:24px;color:#1a1a1a">大客户销售出库单</div>
<div class="a c" style="left:1725px;top:753px;width:282px;height:40px;line-height:40px;font-size:24px;color:#1a1a1a">2026-03-26 10:07:13</div>
<div class="a" style="left:2031px;top:753px;height:40px;line-height:40px;font-size:24px;color:#1a1a1a">兴汇恩董矿四合院</div>
<div class="a c" style="left:2329px;top:753px;width:222px;height:40px;line-height:40px;font-size:24px;color:#1a1a1a">-</div>
<div class="a" style="left:2575px;top:753px;height:40px;line-height:40px;font-size:24px;color:#1a1a1a">指</div>
<div class="a" style="left:38px;top:841px;width:24px;height:24px;border:2px solid #cfcfcf;border-radius:5px;background:linear-gradient(#fff,#f7f7f7)"></div>
<div class="a c" style="left:101px;top:833px;width:102px;height:40px;line-height:40px;font-size:24px;color:#1a1a1a">10</div>
<div class="a c" style="left:203px;top:833px;width:122px;height:40px;line-height:40px;font-size:24px;color:#3a87d8">详细</div>
<div class="a c" style="left:325px;top:833px;width:212px;height:40px;line-height:40px;font-size:24px;color:#1a1a1a">20260326100712</div>
<div class="a c" style="left:537px;top:833px;width:322px;height:40px;line-height:40px;font-size:24px;color:#1a1a1a">CSO-202603261007174240</div>
<div class="a c" style="left:859px;top:833px;width:282px;height:40px;line-height:40px;font-size:24px;color:#1a1a1a">-</div>
<div class="a c" style="left:1141px;top:833px;width:362px;height:40px;line-height:40px;font-size:24px;color:#2f7fd6">XSDD-20260326091315-465</div>
<div class="a c" style="left:1503px;top:833px;width:222px;height:40px;line-height:40px;font-size:24px;color:#1a1a1a">大客户销售出库单</div>
<div class="a c" style="left:1725px;top:833px;width:282px;height:40px;line-height:40px;font-size:24px;color:#1a1a1a">2026-03-26 10:07:12</div>
<div class="a" style="left:2031px;top:833px;height:40px;line-height:40px;font-size:24px;color:#1a1a1a">兴汇恩董分</div>
<div class="a c" style="left:2329px;top:833px;width:222px;height:40px;line-height:40px;font-size:24px;color:#1a1a1a">-</div>
<div class="a" style="left:2575px;top:833px;height:40px;line-height:40px;font-size:24px;color:#1a1a1a">指</div>
<div class="a" style="left:38px;top:921px;width:24px;height:24px;border:2px solid #cfcfcf;border-radius:5px;background:linear-gradient(#fff,#f7f7f7)"></div>
<div class="a c" style="left:101px;top:913px;width:102px;height:40px;line-height:40px;font-size:24px;color:#1a1a1a">11</div>
<div class="a c" style="left:203px;top:913px;width:122px;height:40px;line-height:40px;font-size:24px;color:#3a87d8">详细</div>
<div class="a c" style="left:325px;top:913px;width:212px;height:40px;line-height:40px;font-size:24px;color:#1a1a1a">20260326100711</div>
<div class="a c" style="left:537px;top:913px;width:322px;height:40px;line-height:40px;font-size:24px;color:#1a1a1a">CSO-202603261007152339</div>
<div class="a c" style="left:859px;top:913px;width:282px;height:40px;line-height:40px;font-size:24px;color:#1a1a1a">-</div>
<div class="a c" style="left:1141px;top:913px;width:362px;height:40px;line-height:40px;font-size:24px;color:#2f7fd6">XSDD-20260326091430-073</div>
<div class="a c" style="left:1503px;top:913px;width:222px;height:40px;line-height:40px;font-size:24px;color:#1a1a1a">大客户销售出库单</div>
<div class="a c" style="left:1725px;top:913px;width:282px;height:40px;line-height:40px;font-size:24px;color:#1a1a1a">2026-03-26 10:07:11</div>
<div class="a" style="left:2031px;top:913px;height:40px;line-height:40px;font-size:24px;color:#1a1a1a">兴汇恩港工</div>
<div class="a c" style="left:2329px;top:913px;width:222px;height:40px;line-height:40px;font-size:24px;color:#1a1a1a">-</div>
<div class="a" style="left:2575px;top:913px;height:40px;line-height:40px;font-size:24px;color:#1a1a1a">指</div>
<div class="a" style="left:38px;top:1001px;width:24px;height:24px;border:2px solid #cfcfcf;border-radius:5px;background:linear-gradient(#fff,#f7f7f7)"></div>
<div class="a c" style="left:101px;top:993px;width:102px;height:40px;line-height:40px;font-size:24px;color:#1a1a1a">12</div>
<div class="a c" style="left:203px;top:993px;width:122px;height:40px;line-height:40px;font-size:24px;color:#3a87d8">详细</div>
<div class="a c" style="left:325px;top:993px;width:212px;height:40px;line-height:40px;font-size:24px;color:#1a1a1a">20260326100710</div>
<div class="a c" style="left:537px;top:993px;width:322px;height:40px;line-height:40px;font-size:24px;color:#1a1a1a">CSO-202603261007124248</div>
<div class="a c" style="left:859px;top:993px;width:282px;height:40px;line-height:40px;font-size:24px;color:#1a1a1a">-</div>
<div class="a c" style="left:1141px;top:993px;width:362px;height:40px;line-height:40px;font-size:24px;color:#2f7fd6">XSDD-20260326091512-927</div>
<div class="a c" style="left:1503px;top:993px;width:222px;height:40px;line-height:40px;font-size:24px;color:#1a1a1a">大客户销售出库单</div>
<div class="a c" style="left:1725px;top:993px;width:282px;height:40px;line-height:40px;font-size:24px;color:#1a1a1a">2026-03-26 10:07:10</div>
<div class="a" style="left:2031px;top:993px;height:40px;line-height:40px;font-size:24px;color:#1a1a1a">兴汇恩董矿海关</div>
<div class="a c" style="left:2329px;top:993px;width:222px;height:40px;line-height:40px;font-size:24px;color:#1a1a1a">-</div>
<div class="a" style="left:2575px;top:993px;height:40px;line-height:40px;font-size:24px;color:#1a1a1a">指</div>
<div class="a" style="left:38px;top:1081px;width:24px;height:24px;border:2px solid #cfcfcf;border-radius:5px;background:linear-gradient(#fff,#f7f7f7)"></div>
<div class="a c" style="left:101px;top:1073px;width:102px;height:40px;line-height:40px;font-size:24px;color:#1a1a1a">13</div>
<div class="a c" style="left:203px;top:1073px;width:122px;height:40px;line-height:40px;font-size:24px;color:#3a87d8">详细</div>
<div class="a c" style="left:325px;top:1073px;width:212px;height:40px;line-height:40px;font-size:24px;color:#1a1a1a">20260326100709</div>
<div class="a c" style="left:537px;top:1073px;width:322px;height:40px;line-height:40px;font-size:24px;color:#1a1a1a">CSO-202603261007092514</div>
<div class="a c" style="left:859px;top:1073px;width:282px;height:40px;line-height:40px;font-size:24px;color:#1a1a1a">-</div>
<div class="a c" style="left:1141px;top:1073px;width:362px;height:40px;line-height:40px;font-size:24px;color:#2f7fd6">XSDD-20260326090324-953</div>
<div class="a c" style="left:1503px;top:1073px;width:222px;height:40px;line-height:40px;font-size:24px;color:#1a1a1a">大客户销售出库单</div>
<div class="a c" style="left:1725px;top:1073px;width:282px;height:40px;line-height:40px;font-size:24px;color:#1a1a1a">2026-03-26 10:07:09</div>
<div class="a" style="left:2031px;top:1073px;height:40px;line-height:40px;font-size:24px;color:#1a1a1a">兴汇恩董矿航运</div>
<div class="a c" style="left:2329px;top:1073px;width:222px;height:40px;line-height:40px;font-size:24px;color:#1a1a1a">-</div>
<div class="a" style="left:2575px;top:1073px;height:40px;line-height:40px;font-size:24px;color:#1a1a1a">指</div>
<div class="a" style="left:38px;top:1161px;width:24px;height:24px;border:2px solid #cfcfcf;border-radius:5px;background:linear-gradient(#fff,#f7f7f7)"></div>
<div class="a c" style="left:101px;top:1153px;width:102px;height:40px;line-height:40px;font-size:24px;color:#1a1a1a">14</div>
<div class="a c" style="left:203px;top:1153px;width:122px;height:40px;line-height:40px;font-size:24px;color:#3a87d8">详细</div>
<div class="a c" style="left:325px;top:1153px;width:212px;height:40px;line-height:40px;font-size:24px;color:#1a1a1a">20260326100630</div>
<div class="a c" style="left:537px;top:1153px;width:322px;height:40px;line-height:40px;font-size:24px;color:#1a1a1a">PI-202603261005457267</div>
<div class="a c" style="left:859px;top:1153px;width:282px;height:40px;line-height:40px;font-size:24px;color:#1a1a1a">CG20260326100417</div>
<div class="a c" style="left:1141px;top:1153px;width:362px;height:40px;line-height:40px;font-size:24px;color:#1a1a1a">-</div>
<div class="a c" style="left:1503px;top:1153px;width:222px;height:40px;line-height:40px;font-size:24px;color:#1a1a1a">进货单</div>
<div class="a c" style="left:1725px;top:1153px;width:282px;height:40px;line-height:40px;font-size:24px;color:#1a1a1a">2026-03-26 10:06:30</div>
<div class="a" style="left:2031px;top:1153px;height:40px;line-height:40px;font-size:24px;color:#1a1a1a">-</div>
<div class="a c" style="left:2329px;top:1153px;width:222px;height:40px;line-height:40px;font-size:24px;color:#1a1a1a">-</div>
<div class="a" style="left:2575px;top:1153px;height:40px;line-height:40px;font-size:24px;color:#1a1a1a">-</div>
<div class="a" style="left:38px;top:1241px;width:24px;height:24px;border:2px solid #cfcfcf;border-radius:5px;background:linear-gradient(#fff,#f7f7f7)"></div>
<div class="a c" style="left:101px;top:1233px;width:102px;height:40px;line-height:40px;font-size:24px;color:#1a1a1a">15</div>
<div class="a c" style="left:203px;top:1233px;width:122px;height:40px;line-height:40px;font-size:24px;color:#3a87d8">详细</div>
<div class="a c" style="left:325px;top:1233px;width:212px;height:40px;line-height:40px;font-size:24px;color:#1a1a1a">20260326100554</div>
<div class="a c" style="left:537px;top:1233px;width:322px;height:40px;line-height:40px;font-size:24px;color:#1a1a1a">PI-202603261005276593</div>
<div class="a c" style="left:859px;top:1233px;width:282px;height:40px;line-height:40px;font-size:24px;color:#1a1a1a">CG20260326100417</div>
<div class="a c" style="left:1141px;top:1233px;width:362px;height:40px;line-height:40px;font-size:24px;color:#1a1a1a">-</div>
<div class="a c" style="left:1503px;top:1233px;width:222px;height:40px;line-height:40px;font-size:24px;color:#1a1a1a">进货单</div>
<div class="a c" style="left:1725px;top:1233px;width:282px;height:40px;line-height:40px;font-size:24px;color:#1a1a1a">2026-03-26 10:05:54</div>
<div class="a" style="left:2031px;top:1233px;height:40px;line-height:40px;font-size:24px;color:#1a1a1a">-</div>
<div class="a c" style="left:2329px;top:1233px;width:222px;height:40px;line-height:40px;font-size:24px;color:#1a1a1a">-</div>
<div class="a" style="left:2575px;top:1233px;height:40px;line-height:40px;font-size:24px;color:#1a1a1a">-</div>
<div class="a" style="left:38px;top:1354px;width:24px;height:24px;border:2px solid #cfcfcf;border-radius:5px;background:linear-gradient(#fff,#f7f7f7)"></div>
<div class="a c" style="left:101px;top:1346px;width:102px;height:40px;line-height:40px;font-size:24px;color:#1a1a1a">16</div>
<div class="a c" style="left:203px;top:1346px;width:122px;height:40px;line-height:40px;font-size:24px;color:#3a87d8">详细</div>
<div class="a c" style="left:325px;top:1346px;width:212px;height:40px;line-height:40px;font-size:24px;color:#1a1a1a">20260326100535</div>
<div class="a c" style="left:537px;top:1346px;width:322px;height:40px;line-height:40px;font-size:24px;color:#1a1a1a">CSR-202603261005356438</div>
<div class="a c" style="left:859px;top:1346px;width:282px;height:40px;line-height:40px;font-size:24px;color:#1a1a1a"></div>
<div class="a c" style="left:1141px;top:1338px;width:362px;height:56px;line-height:28px;font-size:24px;color:#2f7fd6;white-space:normal">XSTHSQD-20260323181308-<br>000</div>
<div class="a c" style="left:1503px;top:1346px;width:222px;height:40px;line-height:40px;font-size:24px;color:#1a1a1a">大客户销售退货单</div>
<div class="a c" style="left:1725px;top:1346px;width:282px;height:40px;line-height:40px;font-size:24px;color:#1a1a1a">2026-03-26 10:05:35</div>
<div class="a" style="left:2031px;top:1346px;height:40px;line-height:40px;font-size:24px;color:#1a1a1a">小谢测试</div>
<div class="a c" style="left:2329px;top:1346px;width:222px;height:40px;line-height:40px;font-size:24px;color:#1a1a1a"></div>
<div class="a" style="left:2575px;top:1346px;height:40px;line-height:40px;font-size:24px;color:#1a1a1a"></div>
</div>
<div class="a" style="left:340px;top:1542px;width:2586px;height:14px;background:#e2e2e2"></div>
<div class="a" style="left:340px;top:1542px;width:1324px;height:14px;background:#aaaaaa;border-radius:7px"></div>
<div class="a" style="left:2926px;top:176px;width:14px;height:1366px;background:#e2e2e2"></div>
<div class="a" style="left:2926px;top:1542px;width:14px;height:14px;background:#fafafa"></div>
<div class="a" style="left:2926px;top:176px;width:14px;height:728px;background:#aaaaaa;border-radius:7px"></div>
<div class="a" style="left:2872px;top:1180px;width:64px;height:64px;background:#3d86d6;border-radius:8px 0 0 8px"></div>
<svg style="left:2872px;top:1180px" width="64" height="64"><path d="M31.9,15.5 L31.9,35.5 M23.5,27.8 L31.9,36 L40.3,27.8" fill="none" stroke="#fff" stroke-width="3.4" stroke-linecap="round" stroke-linejoin="round"/><path d="M16.9,35.5 L16.9,41 Q16.9,45.6 21.5,45.6 L42.5,45.6 Q47,45.6 47,41 L47,35.5" fill="none" stroke="#fff" stroke-width="3.4" stroke-linecap="round" stroke-linejoin="round"/></svg>
<div class="a" style="left:340px;top:1556px;width:2600px;height:120px;background:#f2f2f2"></div>
<div class="a" style="left:378px;top:1604px;width:24px;height:24px;border:2px solid #cfcfcf;border-radius:5px;background:#fff"></div>
<div class="a" style="left:424px;top:1595px;height:40px;line-height:40px;font-size:24px;color:#222">本页全选</div>
<div class="a" style="left:560px;top:1596px;width:2px;height:40px;background:#cfcfcf"></div>
<div class="a" style="left:602px;top:1604px;width:24px;height:24px;border-radius:12px;background:linear-gradient(#4a8ef5,#2f6fe0)"></div>
<div class="a" style="left:609.5px;top:1611.5px;width:9px;height:9px;border-radius:5px;background:#fff"></div>
<div class="a" style="left:642px;top:1595px;height:40px;line-height:40px;font-size:24px;color:#222">已选中(<b style="color:#439bcf;font-size:29.5px;position:relative;top:2px">0</b>)</div>
<div class="a" style="left:765px;top:1604px;width:24px;height:24px;border-radius:12px;border:2px solid #cfcfcf;background:#fff"></div>
<div class="a" style="left:803px;top:1595px;height:40px;line-height:40px;font-size:24px;color:#222">全部(<b style="color:#439bcf;font-size:29.5px;position:relative;top:2px">30</b>)</div>
<div class="a" style="left:919px;top:1595px;height:40px;line-height:40px;font-size:24px;color:#3a87d8">(重选)</div>
<div class="a c" style="left:1003px;top:1577px;width:200px;height:78px;line-height:74px;border:2px solid #cfcfcf;border-radius:5px;background:#ededed;font-size:28px;color:#9a9a9a">批量操作</div>
<div class="a" style="left:1239px;top:1596px;width:2px;height:40px;background:#cfcfcf"></div>
<div class="a" style="left:1270px;top:1595px;height:40px;line-height:40px;font-size:24px;color:#222">总单数 <b style="color:#439bcf;font-size:29.5px;position:relative;top:2px">30</b></div>
<svg style="left:2046px;top:1600px" width="24" height="34"><path d="M7.2,8 L7.2,26 M21,8 L11.5,17 L21,26" fill="none" stroke="#999" stroke-width="1.8"/></svg>
<div class="a" style="left:2074px;top:1595px;height:40px;line-height:40px;font-size:24px;color:#222">首页</div>
<svg style="left:2146px;top:1600px" width="28" height="34"><path d="M13.5,8 L5.5,17 L13.5,26 M23,8 L15,17 L23,26" fill="none" stroke="#999" stroke-width="1.8"/></svg>
<div class="a" style="left:2177px;top:1595px;height:40px;line-height:40px;font-size:24px;color:#222">前一页</div>
<div class="a" style="left:2274px;top:1595px;height:40px;line-height:40px;font-size:24px;color:#222">第</div>
<div class="a c" style="left:2307px;top:1596px;width:68px;height:40px;line-height:36px;border:2px solid #d5d5d5;border-radius:4px;background:#fff;font-size:24px;color:#3a87d8">1</div>
<div class="a" style="left:2382px;top:1595px;height:40px;line-height:40px;font-size:24px;color:#222">页</div>
<div class="a" style="left:2430px;top:1595px;height:40px;line-height:40px;font-size:24px;color:#222">共1页</div>
<div class="a" style="left:2518px;top:1595px;height:40px;line-height:40px;font-size:24px;color:#222">下一页</div>
<svg style="left:2588px;top:1600px" width="32" height="34"><path d="M10.5,8 L18.5,17 L10.5,26 M19.5,8 L27.5,17 L19.5,26" fill="none" stroke="#999" stroke-width="1.8"/></svg>
<div class="a" style="left:2643px;top:1595px;height:40px;line-height:40px;font-size:24px;color:#222">尾页</div>
<svg style="left:2694px;top:1600px" width="26" height="34"><path d="M6,8 L15,17 L6,26 M19.5,8 L19.5,26" fill="none" stroke="#999" stroke-width="1.8"/></svg>
<div class="a" style="left:2734px;top:1592px;width:180px;height:48px;border:2px solid #d5d5d5;border-radius:4px;background:#fff"></div>
<div class="a" style="left:2752px;top:1596px;height:40px;line-height:40px;font-size:24px;color:#999">每页50条</div>
<svg style="left:2880px;top:1606px" width="22" height="20"><path d="M5,6 L17,6 L11,12 Z" fill="#3f93d6"/></svg>
<div class="a" style="left:80px;top:0;width:2860px;height:30px;background:linear-gradient(rgba(0,0,0,0.215),rgba(0,0,0,0.165) 5px,rgba(0,0,0,0.11) 10px,rgba(0,0,0,0.06) 15px,rgba(0,0,0,0.027) 20px,rgba(0,0,0,0) 28px)"></div>
<div class="a" style="left:0;top:0;width:80px;height:30px;background:linear-gradient(rgba(0,0,0,0.215),rgba(0,0,0,0.165) 5px,rgba(0,0,0,0.11) 10px,rgba(0,0,0,0.06) 15px,rgba(0,0,0,0.027) 20px,rgba(0,0,0,0) 28px)"></div>
</body></html>
